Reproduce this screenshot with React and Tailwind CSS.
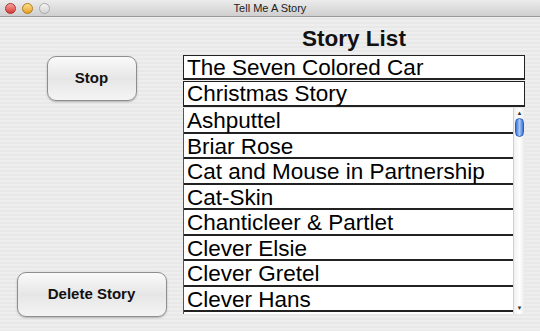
import { useState } from "react";

const stories = [
  "Ashputtel",
  "Briar Rose",
  "Cat and Mouse in Partnership",
  "Cat-Skin",
  "Chanticleer & Partlet",
  "Clever Elsie",
  "Clever Gretel",
  "Clever Hans",
];

const Light = ({ className }) => (
  <div className={`size-[11px] rounded-full border ${className}`} />
);

const AquaButton = ({ children, className }) => (
  <button
    className={`rounded-[9px] border border-[#8e8e8e] bg-gradient-to-b from-[#fafafa] via-[#e6e6e6] to-[#f4f4f4] text-[15px] font-bold text-[#111] shadow-[0_1px_2px_rgba(0,0,0,0.25)] ${className}`}
  >
    {children}
  </button>
);

export default function App() {
  const [playing] = useState(true);

  return (
    <div className="h-[331px] w-[540px] overflow-hidden bg-[repeating-linear-gradient(180deg,#eeeeee_0px,#eeeeee_2px,#e8e8e8_2px,#e8e8e8_4px)] font-['Liberation_Sans',Arial,sans-serif]">
      <div className="relative flex h-[17px] items-center border-b border-[#9a9a9a] bg-gradient-to-b from-[#ececec] to-[#cfcfcf] px-[5px]">
        <div className="flex gap-[6px]">
          <Light className="border-[#a33] bg-gradient-to-b from-[#f3a0a0] to-[#d9302f]" />
          <Light className="border-[#b07a1a] bg-gradient-to-b from-[#fbe08a] to-[#e9a012]" />
          <Light className="border-[#aaa] bg-gradient-to-b from-[#f4f4f4] to-[#d4d4d4]" />
        </div>
        <div className="absolute inset-x-0 top-0 text-center text-[11px] leading-[17px] text-[#222]">
          Tell Me A Story
        </div>
      </div>

      <div className="flex">
        <div className="flex h-[314px] w-[183px] flex-col items-center pt-[39px] pb-[14px]">
          <AquaButton className="h-[45px] w-[90px]">{playing ? "Stop" : "Play"}</AquaButton>
          <div className="flex-1" />
          <AquaButton className="h-[45px] w-[150px]">Delete Story</AquaButton>
        </div>

        <div className="flex w-[342px] flex-col">
          <div className="h-[38px] pt-[8px] text-center text-[22.5px] font-bold leading-[28px] text-[#111]">
            Story List
          </div>
          <div className="h-[25px] border border-b-2 border-[#222] bg-white pl-[3px] text-[22.5px] leading-[23px] text-black">
            The Seven Colored Car
          </div>
          <div className="mt-px h-[26px] border border-b-2 border-[#222] bg-white pl-[3px] text-[22.5px] leading-[24px] text-black">
            Christmas Story
          </div>
          <div className="mt-px flex h-[206px] border-l border-[#555] bg-white">
            <div className="flex-1">
              {stories.map((s) => (
                <div
                  key={s}
                  className="h-[25.5px] border-b-2 border-[#222] pl-[3px] text-[22.5px] leading-[25px] text-black"
                >
                  {s}
                </div>
              ))}
            </div>
            <div className="flex w-[12px] flex-col items-center border-l border-[#cfcfcf] bg-gradient-to-r from-[#f0f0f0] via-[#ffffff] to-[#e8e8e8]">
              <div className="mt-[2px] text-[6px] leading-[6px] text-[#333]">▲</div>
              <div className="mt-[2px] h-[19px] w-[9px] rounded-full border border-[#2d5fb4] bg-gradient-to-r from-[#3a74d8] via-[#a9c8f5] to-[#3a74d8]" />
              <div className="flex-1" />
              <div className="mb-[3px] text-[6px] leading-[6px] text-[#333]">▼</div>
            </div>
          </div>
        </div>
      </div>
    </div>
  );
}
